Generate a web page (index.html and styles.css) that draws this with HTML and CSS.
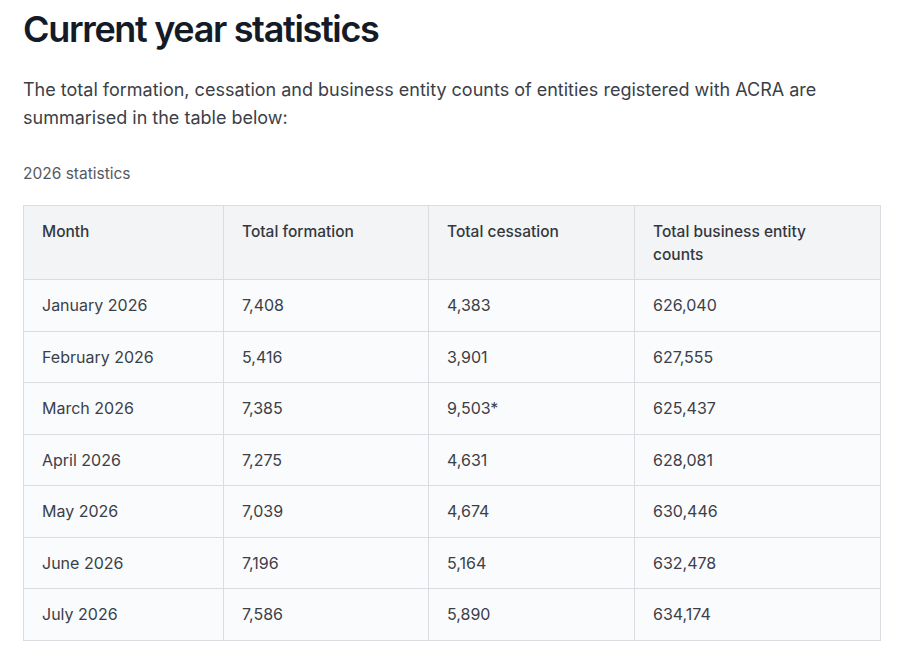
FILE: index.html
```html
<!DOCTYPE html>
<html lang="en">
<head>
<meta charset="utf-8">
<title>Current year statistics</title>
<link rel="stylesheet" href="styles.css">
</head>
<body>
<main class="page">
  <h1 class="title">Current year statistics</h1>
  <p class="intro">The total formation, cessation and business entity counts of entities registered with ACRA are summarised in the table below:</p>
  <p class="caption">2026 statistics</p>
  <table class="stats">
    <colgroup>
      <col class="c1"><col class="c2"><col class="c3"><col class="c4">
    </colgroup>
    <thead>
      <tr><th>Month</th><th>Total formation</th><th>Total cessation</th><th>Total business entity counts</th></tr>
    </thead>
    <tbody>
      <tr><td>January 2026</td><td>7,408</td><td>4,383</td><td>626,040</td></tr>
      <tr><td>February 2026</td><td>5,416</td><td>3,901</td><td>627,555</td></tr>
      <tr><td>March 2026</td><td>7,385</td><td>9,503*</td><td>625,437</td></tr>
      <tr><td>April 2026</td><td>7,275</td><td>4,631</td><td>628,081</td></tr>
      <tr><td>May 2026</td><td>7,039</td><td>4,674</td><td>630,446</td></tr>
      <tr><td>June 2026</td><td>7,196</td><td>5,164</td><td>632,478</td></tr>
      <tr><td>July 2026</td><td>7,586</td><td>5,890</td><td>634,174</td></tr>
    </tbody>
  </table>
</main>
</body>
</html>
```

FILE: styles.css
```css
html, body {
  margin: 0;
  padding: 0;
  background: #ffffff;
}
body {
  font-family: Inter, "Noto Sans", "Liberation Sans", sans-serif;
  color: #3b4048;
}
.page {
  padding: 0 20px 0 23px;
}
.title {
  margin: 0;
  padding-top: 8px;
  font-size: 36px;
  line-height: 42px;
  font-weight: 600;
  letter-spacing: -0.037em;
  color: #141a26;
}
.intro {
  margin: 26px 0 0;
  font-size: 18px;
  line-height: 28px;
  color: #3b4048;
}
.caption {
  margin: 31px 0 0;
  font-size: 15.5px;
  line-height: 22px;
  color: #555a61;
}
.stats {
  margin-top: 20px;
  width: 857px;
  table-layout: fixed;
  border-collapse: collapse;
  font-size: 16px;
}
.c1 { width: 200px; }
.c2 { width: 205px; }
.c3 { width: 206px; }
.c4 { width: 246px; }
.stats th,
.stats td {
  border: 1px solid #d9dce1;
  text-align: left;
  vertical-align: top;
  padding: 14px 30px 14px 18px;
}
.stats th {
  background: #f3f4f6;
  font-size: 15.5px;
  font-weight: 500;
  line-height: 23px;
  color: #33383f;
  height: 44px;
  padding-bottom: 13px;
}
.stats td {
  background: #fafbfc;
  line-height: 23px;
  padding-top: 14px;
  padding-bottom: 13.5px;
  color: #3b4048;
}
```
